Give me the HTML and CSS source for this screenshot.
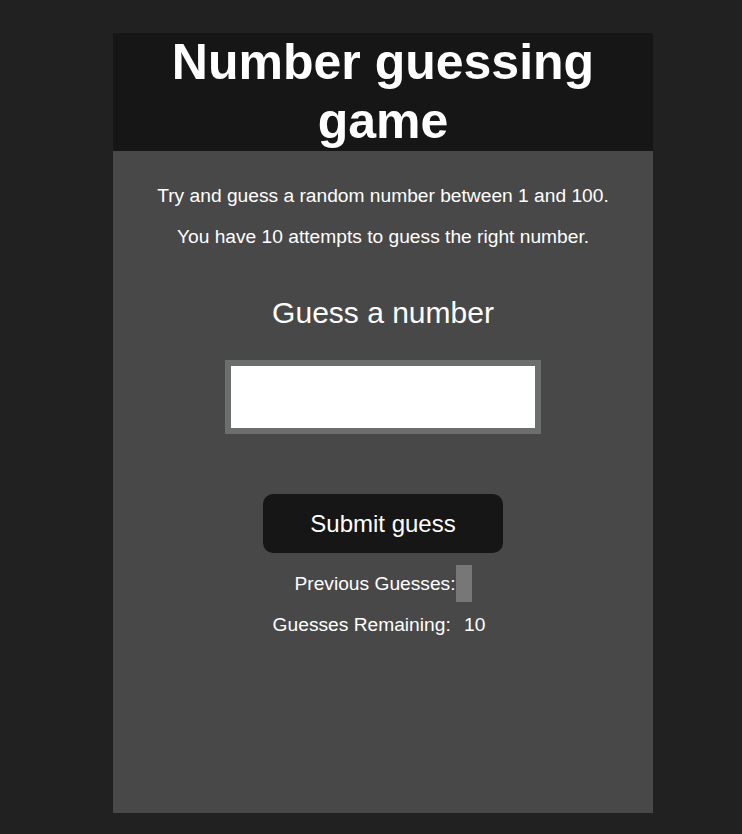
FILE: index.html
```html
<!DOCTYPE html>
<html lang="en">
<head>
<meta charset="utf-8">
<title>Number guessing game</title>
<link rel="stylesheet" href="styles.css">
</head>
<body>
<div class="container">
  <header class="header">
    <h1 class="title">Number guessing game</h1>
  </header>
  <main class="main">
    <p class="text">Try and guess a random number between 1 and 100.</p>
    <p class="text">You have 10 attempts to guess the right number.</p>
    <h2 class="label">Guess a number</h2>
    <input class="guess-field" type="text" aria-label="Guess a number">
    <button class="submit" type="button">Submit guess</button>
    <p class="text">Previous Guesses:<span class="guesses"></span></p>
    <p class="text">Guesses Remaining: <span class="remaining">10</span></p>
  </main>
</div>
</body>
</html>
```
FILE: styles.css
```css
html, body {
  margin: 0;
  padding: 0;
}
body {
  background: #212121;
  font-family: "Liberation Sans", Arial, sans-serif;
  color: #ffffff;
}
.container {
  width: 540px;
  height: 780px;
  margin: 33px 0 0 113px;
  background: #484848;
  display: flex;
  flex-direction: column;
}
.header {
  background: #161616;
  height: 118px;
  flex: none;
}
.title {
  margin: 0;
  font-size: 50px;
  line-height: 59px;
  font-weight: bold;
  text-align: center;
}
.main {
  padding-top: 15px;
  text-align: center;
}
.text {
  font-size: 19.2px;
  margin: 19.2px 0;
}
.label {
  font-size: 30px;
  font-weight: normal;
  margin: 48px 0 0;
}
.guess-field {
  display: block;
  box-sizing: border-box;
  width: 316px;
  height: 74px;
  margin: 30px auto 0;
  border: 6px solid #6c6e6d;
  background: #ffffff;
  padding: 0 8px;
  font-size: 24px;
  outline: none;
}
.submit {
  display: block;
  width: 240px;
  height: 59px;
  margin: 60px auto 0;
  border: none;
  border-radius: 10px;
  background: #161616;
  color: #ffffff;
  font-family: "Liberation Sans", Arial, sans-serif;
  font-size: 24px;
}
.guesses {
  background: #777777;
  padding: 8px;
}
.remaining {
  padding: 8px;
}
```
